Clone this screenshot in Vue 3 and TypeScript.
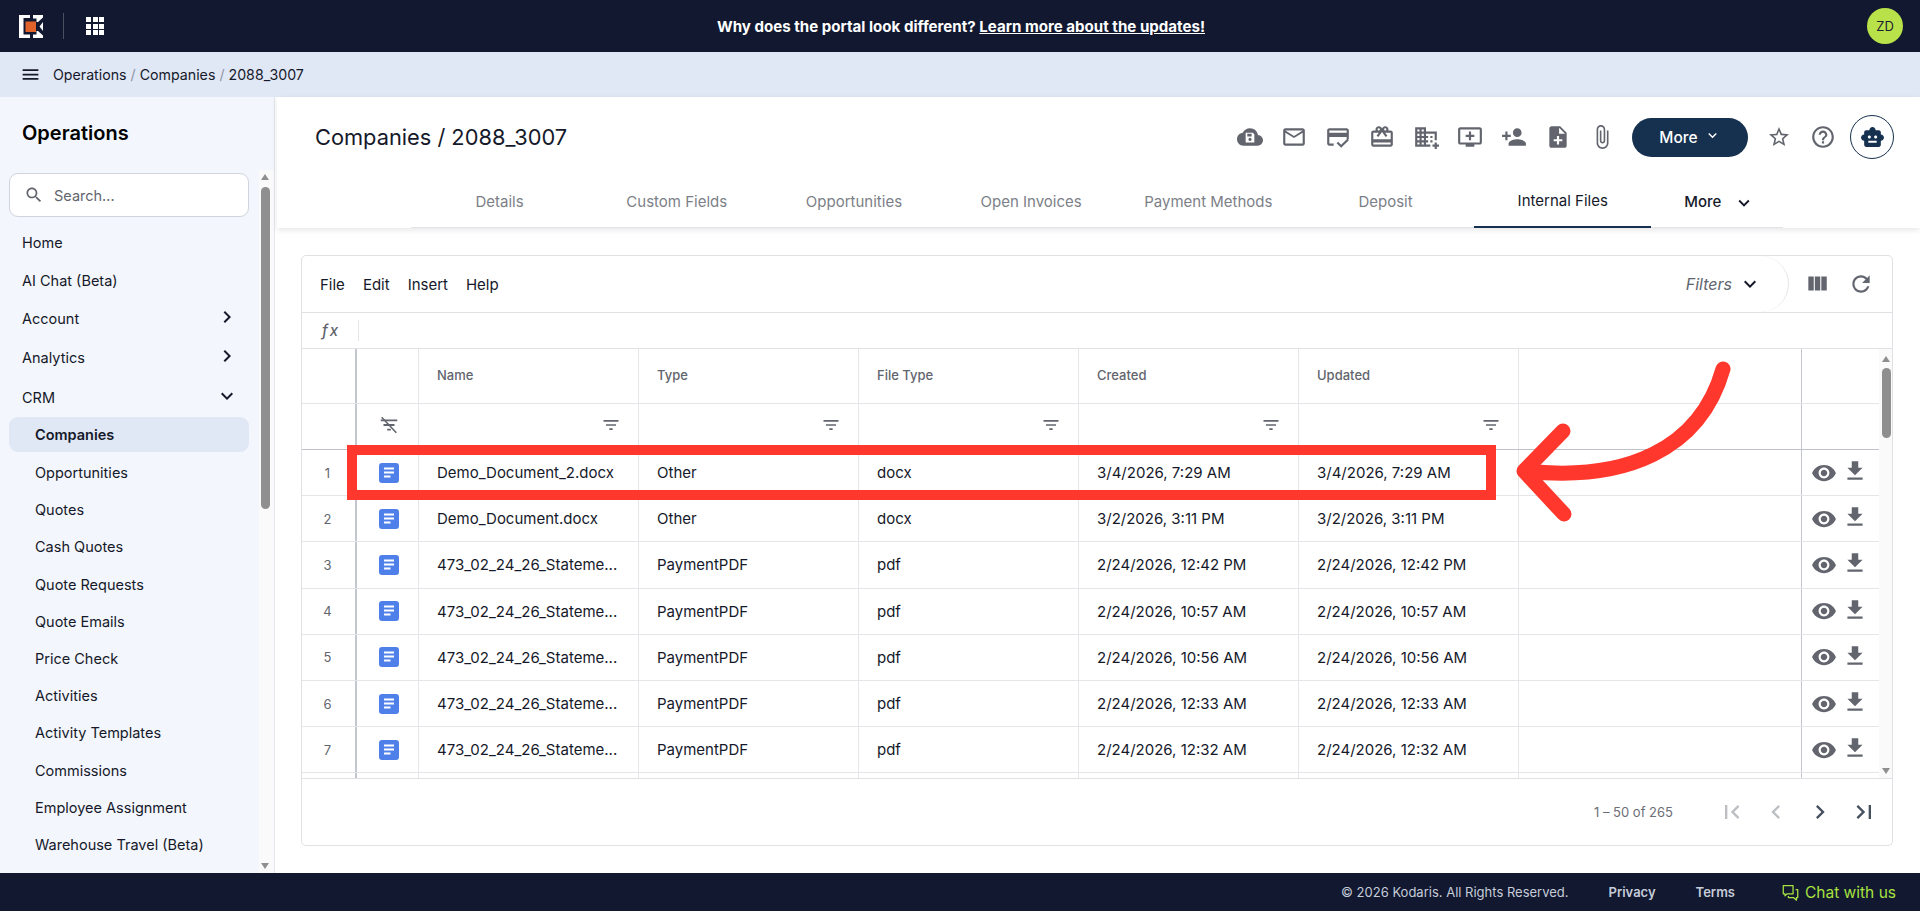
<script setup lang="ts">
const icons: Record<string, string> = {
  cloud: 'M19.35 10.04C18.67 6.59 15.64 4 12 4 9.11 4 6.6 5.64 5.35 8.04 2.34 8.36 0 10.91 0 14c0 3.31 2.69 6 6 6h13c2.76 0 5-2.24 5-5 0-2.64-2.05-4.78-4.65-4.96z',
  mail: 'M20 4H4c-1.1 0-1.99.9-1.99 2L2 18c0 1.1.9 2 2 2h16c1.1 0 2-.9 2-2V6c0-1.1-.9-2-2-2zm0 14H4V8l8 5 8-5v10zm-8-7L4 6h16l-8 5z',
  card: 'M20 4H4c-1.11 0-2 .89-2 2v12c0 1.11.89 2 2 2h4v-2H4v-6h16v2h2V6c0-1.1-.9-2-2-2zm0 4H4V6h16v2zm-5.07 11.17-2.83-2.83-1.41 1.41L14.93 22 22 14.93l-1.41-1.41-5.66 5.65z',
  gift: 'M20 6h-2.18c.11-.31.18-.65.18-1 0-1.66-1.34-3-3-3-1.05 0-1.96.54-2.5 1.35l-.5.67-.5-.68C10.96 2.54 10.05 2 9 2 7.34 2 6 3.34 6 5c0 .35.07.69.18 1H4c-1.11 0-1.99.89-1.99 2L2 19c0 1.11.89 2 2 2h16c1.11 0 2-.89 2-2V8c0-1.11-.89-2-2-2zm-5-2c.55 0 1 .45 1 1s-.45 1-1 1-1-.45-1-1 .45-1 1-1zM9 4c.55 0 1 .45 1 1s-.45 1-1 1-1-.45-1-1 .45-1 1-1zm11 15H4v-2h16v2zm0-5H4V8h5.08L7 10.83 8.62 12 11 8.76l1-1.36 1 1.36L15.38 12 17 10.83 14.92 8H20v6z',
  domain: 'M12 7V3H2v18h14v-2h-4v-2h2v-2h-2v-2h2v-2h-2V9h8v6h2V7H12zM6 19H4v-2h2v2zm0-4H4v-2h2v2zm0-4H4V9h2v2zm0-4H4V5h2v2zm4 12H8v-2h2v2zm0-4H8v-2h2v2zm0-4H8V9h2v2zm0-4H8V5h2v2zm14 12v2h-2v2h-2v-2h-2v-2h2v-2h2v2h2zm-6-8h-2v2h2v-2zm0 4h-2v2h2v-2z',
  queue: 'M21 3H3c-1.11 0-2 .89-2 2v12c0 1.1.89 2 2 2h5v2h8v-2h5c1.1 0 1.99-.9 1.99-2L23 5c0-1.11-.9-2-2-2zm0 14H3V5h18v12zm-5-7v2h-3v3h-2v-3H8v-2h3V7h2v3h3z',
  person: 'M15 12c2.21 0 4-1.79 4-4s-1.79-4-4-4-4 1.79-4 4 1.79 4 4 4zm-9-2V7H4v3H1v2h3v3h2v-3h3v-2H6zm9 4c-2.67 0-8 1.34-8 4v2h16v-2c0-2.66-5.33-4-8-4z',
  note: 'M14 2H6c-1.1 0-1.99.9-1.99 2L4 20c0 1.1.89 2 1.99 2H18c1.1 0 2-.9 2-2V8l-6-6zm2 14h-3v3h-2v-3H8v-2h3v-3h2v3h3v2zm-3-7V3.5L18.5 9H13z',
  attach: 'M16.5 6v11.5c0 2.21-1.79 4-4 4s-4-1.79-4-4V5c0-1.38 1.12-2.5 2.5-2.5s2.5 1.12 2.5 2.5v10.5c0 .55-.45 1-1 1s-1-.45-1-1V6H10v9.5c0 1.38 1.12 2.5 2.5 2.5s2.5-1.12 2.5-2.5V5c0-2.21-1.79-4-4-4S7 2.79 7 5v12.5c0 3.04 2.46 5.5 5.5 5.5s5.5-2.46 5.5-5.5V6h-1.5z',
  star: 'M22 9.24l-7.19-.62L12 2 9.19 8.63 2 9.24l5.46 4.73L5.82 21 12 17.27 18.18 21l-1.63-7.03L22 9.24zM12 15.4l-3.76 2.27 1-4.28-3.32-2.88 4.38-.38L12 6.1l1.71 4.04 4.38.38-3.32 2.88 1 4.28L12 15.4z',
  help: 'M11 18h2v-2h-2v2zm1-16C6.48 2 2 6.48 2 12s4.48 10 10 10 10-4.48 10-10S17.52 2 12 2zm0 18c-4.41 0-8-3.59-8-8s3.59-8 8-8 8 3.59 8 8-3.59 8-8 8zm0-14c-2.21 0-4 1.79-4 4h2c0-1.1.9-2 2-2s2 .9 2 2c0 2-3 1.75-3 5h2c0-2.25 3-2.5 3-5 0-2.21-1.79-4-4-4z',
  eye: 'M12 4.5C7 4.5 2.73 7.61 1 12c1.73 4.39 6 7.5 11 7.5s9.27-3.11 11-7.5c-1.73-4.39-6-7.5-11-7.5zM12 17c-2.76 0-5-2.24-5-5s2.24-5 5-5 5 2.24 5 5-2.24 5-5 5zm0-8c-1.66 0-3 1.34-3 3s1.34 3 3 3 3-1.34 3-3-1.34-3-3-3z',
  download: 'M19 9h-4V3H9v6H5l7 7 7-7zM5 18v2h14v-2H5z',
  refresh: 'M17.65 6.35C16.2 4.9 14.21 4 12 4c-4.42 0-7.99 3.58-7.99 8s3.57 8 7.99 8c3.73 0 6.84-2.55 7.73-6h-2.08c-.82 2.33-3.04 4-5.65 4-3.31 0-6-2.69-6-6s2.69-6 6-6c1.66 0 3.14.69 4.22 1.78L13 11h7V4l-2.35 2.35z',
  columns: 'M10 18h5V5h-5v13zm-6 0h5V5H4v13zM16 5v13h5V5h-5z',
  filter: 'M10 18h4v-2h-4v2zM3 6v2h18V6H3zm3 7h12v-2H6v2z',
  first: 'M18.41 16.59L13.82 12l4.59-4.59L17 6l-6 6 6 6zM6 6h2v12H6z',
  prev: 'M15.41 7.41L14 6l-6 6 6 6 1.41-1.41L10.83 12z',
  next: 'M10 6L8.59 7.41 13.17 12l-4.58 4.59L10 18l6-6z',
  last: 'M5.59 7.41L10.18 12l-4.59 4.59L7 18l6-6-6-6zM16 6h2v12h-2z',
  down: 'M7.41 8.59L12 13.17l4.59-4.58L18 10l-6 6-6-6z',
  search: 'M15.5 14h-.79l-.28-.27C15.41 12.59 16 11.11 16 9.5 16 5.91 13.09 3 9.5 3S3 5.91 3 9.5 5.91 16 9.5 16c1.61 0 3.09-.59 4.23-1.57l.27.28v.79l5 4.99L20.49 19l-4.99-5zm-6 0C7.01 14 5 11.99 5 9.5S7.01 5 9.5 5 14 7.01 14 9.5 11.99 14 9.5 14z',
  robot: 'M20 9V7c0-1.1-.9-2-2-2h-3c0-1.66-1.34-3-3-3S9 3.34 9 5H6c-1.1 0-2 .9-2 2v2c-1.66 0-3 1.34-3 3s1.34 3 3 3v4c0 1.1.9 2 2 2h12c1.1 0 2-.9 2-2v-4c1.66 0 3-1.34 3-3s-1.34-3-3-3zM7.5 11.5C7.5 10.67 8.17 10 9 10s1.5.67 1.5 1.5S9.83 13 9 13s-1.5-.67-1.5-1.5zM16 17H8v-2h8v2zm-1-4c-.83 0-1.5-.67-1.5-1.5S14.17 10 15 10s1.5.67 1.5 1.5S15.83 13 15 13z',
  menu: 'M3 18h18v-2H3v2zm0-5h18v-2H3v2zm0-7v2h18V6H3z',
}

const toolIcons = ['mail', 'card', 'gift', 'domain', 'queue', 'person', 'note', 'attach']
const tabs = ['Details', 'Custom Fields', 'Opportunities', 'Open Invoices', 'Payment Methods', 'Deposit', 'Internal Files']
const headers = ['Name', 'Type', 'File Type', 'Created', 'Updated']

const navTop = [
  { label: 'Home' },
  { label: 'AI Chat (Beta)' },
  { label: 'Account', chev: 'next' },
  { label: 'Analytics', chev: 'next' },
  { label: 'CRM', chev: 'down' },
]
const navSub = ['Companies', 'Opportunities', 'Quotes', 'Cash Quotes', 'Quote Requests', 'Quote Emails', 'Price Check', 'Activities', 'Activity Templates', 'Commissions', 'Employee Assignment', 'Warehouse Travel (Beta)']

const stmt = '473_02_24_26_Stateme...'
const rows = [
  ['Demo_Document_2.docx', 'Other', 'docx', '3/4/2026, 7:29 AM'],
  ['Demo_Document.docx', 'Other', 'docx', '3/2/2026, 3:11 PM'],
  [stmt, 'PaymentPDF', 'pdf', '2/24/2026, 12:42 PM'],
  [stmt, 'PaymentPDF', 'pdf', '2/24/2026, 10:57 AM'],
  [stmt, 'PaymentPDF', 'pdf', '2/24/2026, 10:56 AM'],
  [stmt, 'PaymentPDF', 'pdf', '2/24/2026, 12:33 AM'],
  [stmt, 'PaymentPDF', 'pdf', '2/24/2026, 12:32 AM'],
]
</script>

<template>
  <div class="page">
    <header class="topbar">
      <div class="brand">
        <svg class="logo" viewBox="0 0 24 24" width="24" height="24">
          <path fill="#fff" d="M0 1H11V4H4.500V20.500H11V24H0zM14 1H24V3.500L19 8H17.500V4.500H14zM14 24H24V21.500L19 17H17.500V20.500H14zM24 8L20.500 12.500L24 17z" />
          <rect x="6.500" y="7.500" width="10.500" height="10.500" fill="#e2632a" />
        </svg>
        <span class="brand-rule"></span>
        <span class="apps"><i v-for="n in 9" :key="n"></i></span>
      </div>
      <p class="banner">Why does the portal look different? <a>Learn more about the updates!</a></p>
      <span class="avatar">ZD</span>
    </header>

    <nav class="crumbs">
      <svg class="crumb-menu" viewBox="0 0 24 24"><path :d="icons.menu" /></svg>
      <span>Operations</span><em>/</em><span>Companies</span><em>/</em><span>2088_3007</span>
    </nav>

    <div class="body">
      <aside class="side">
        <h2 class="side-title">Operations</h2>
        <div class="side-scroll">
          <div class="side-list">
            <label class="search">
              <svg viewBox="0 0 24 24"><path :d="icons.search" /></svg>
              <span>Search...</span>
            </label>
            <ul class="nav-top">
              <li v-for="n in navTop" :key="n.label">
                <span>{{ n.label }}</span>
                <svg v-if="n.chev" viewBox="0 0 24 24"><path :d="icons[n.chev]" /></svg>
              </li>
            </ul>
            <ul class="nav-sub">
              <li v-for="(s, i) in navSub" :key="s" :class="{ on: i === 0 }">{{ s }}</li>
            </ul>
          </div>
          <div class="side-bar">
            <i class="arrow up"></i>
            <i class="thumb"></i>
            <i class="arrow dn"></i>
          </div>
        </div>
      </aside>

      <main class="main">
        <section class="head">
          <div class="head-row">
            <h1>Companies / 2088_3007</h1>
            <div class="tools">
              <svg class="tool" viewBox="0 0 24 24">
                <path :d="icons.cloud" />
                <path fill="#fff" fill-rule="evenodd" d="M8 8h6.500L16 9.500V17H8zM9.500 9v2.500h4V9zM12 12.800a1.500 1.500 0 1 0 .01 0z" />
              </svg>
              <svg v-for="t in toolIcons" :key="t" class="tool" viewBox="0 0 24 24"><path :d="icons[t]" /></svg>
              <button class="more-btn">More <svg viewBox="0 0 24 24"><path :d="icons.down" /></svg></button>
              <svg class="tool star" viewBox="0 0 24 24"><path :d="icons.star" /></svg>
              <svg class="tool q" viewBox="0 0 24 24"><path :d="icons.help" /></svg>
              <span class="robot"><svg viewBox="0 0 24 24"><path :d="icons.robot" /></svg></span>
            </div>
          </div>
          <div class="tabs">
            <a v-for="t in tabs" :key="t" :class="{ active: t === 'Internal Files' }">{{ t }}</a>
            <a class="tab-more">More <svg viewBox="0 0 24 24"><path :d="icons.down" /></svg></a>
          </div>
        </section>

        <section class="card">
          <div class="menubar">
            <span v-for="m in ['File', 'Edit', 'Insert', 'Help']" :key="m">{{ m }}</span>
            <div class="filters">
              <i>Filters</i>
              <svg viewBox="0 0 24 24"><path :d="icons.down" /></svg>
            </div>
            <div class="menu-icons">
              <svg viewBox="0 0 24 24"><path :d="icons.columns" /></svg>
              <svg viewBox="0 0 24 24"><path :d="icons.refresh" /></svg>
            </div>
          </div>
          <div class="fxbar"><i>fx</i><b></b></div>
          <div class="grid-wrap">
            <div class="grid">
              <div class="row hdr">
                <div class="c num"></div>
                <div class="c ico"></div>
                <div v-for="h in headers" :key="h" class="c">{{ h }}</div>
                <div class="c"></div>
                <div class="c act"></div>
              </div>
              <div class="row flt">
                <div class="c num"></div>
                <div class="c ico">
                  <svg class="nofilter" viewBox="0 0 24 24">
                    <path :d="icons.filter" />
                    <path class="slash" d="M4 3.500L20 20.500" />
                  </svg>
                </div>
                <div v-for="h in headers" :key="h" class="c end">
                  <svg viewBox="0 0 24 24"><path :d="icons.filter" /></svg>
                </div>
                <div class="c"></div>
                <div class="c act"></div>
              </div>
              <div v-for="(r, i) in rows" :key="i" class="row data">
                <div class="c num">{{ i + 1 }}</div>
                <div class="c ico">
                  <svg class="doc" viewBox="0 0 20 20">
                    <rect width="20" height="20" rx="3" fill="#4f80ea" />
                    <path class="doc-lines" d="M5 5.500h10M5 9.500h10M5 13.500h6.500" />
                  </svg>
                </div>
                <div class="c">{{ r[0] }}</div>
                <div class="c">{{ r[1] }}</div>
                <div class="c">{{ r[2] }}</div>
                <div class="c">{{ r[3] }}</div>
                <div class="c">{{ r[3] }}</div>
                <div class="c"></div>
                <div class="c act">
                  <svg class="a-eye" viewBox="0 0 24 24"><path :d="icons.eye" /></svg>
                  <svg class="a-dl" viewBox="0 0 24 24"><path :d="icons.download" /></svg>
                </div>
              </div>
              <div class="row stub">
                <div class="c num"></div><div class="c ico"></div>
                <div v-for="h in headers" :key="h" class="c"></div>
                <div class="c"></div><div class="c act"></div>
              </div>
            </div>
            <div class="grid-bar">
              <i class="arrow up"></i>
              <i class="thumb"></i>
              <i class="arrow dn"></i>
            </div>
          </div>
          <div class="pager">
            <span class="count">1 – 50 of 265</span>
            <svg class="off" viewBox="0 0 24 24"><path :d="icons.first" /></svg>
            <svg class="off" viewBox="0 0 24 24"><path :d="icons.prev" /></svg>
            <svg viewBox="0 0 24 24"><path :d="icons.next" /></svg>
            <svg viewBox="0 0 24 24"><path :d="icons.last" /></svg>
          </div>
        </section>
      </main>
    </div>

    <footer class="foot">
      <span class="copy">© 2026 Kodaris. All Rights Reserved.</span>
      <a>Privacy</a>
      <a>Terms</a>
      <span class="chat">
        <svg class="chat-ico" viewBox="0 0 20 20">
          <path d="M1.500 2h11.500v9.500H6L3.500 14V11.500H1.500z" />
          <path d="M16 6.500h2.500V16H17v3L13.500 16H7.500V14" />
        </svg>
        Chat with us
      </span>
    </footer>

    <svg class="annot" viewBox="0 0 1920 911">
      <rect x="352" y="450" width="1139" height="45" stroke-width="10" />
      <path d="M1723 369C1700 450 1625 482 1525 471" stroke-width="15" stroke-linecap="round" />
      <path d="M1563 431L1524 471L1564 514" stroke-width="15" stroke-linecap="round" stroke-linejoin="round" />
    </svg>
  </div>
</template>

<style>
html, body { margin: 0; height: 100%; overflow: hidden; background: #fff; }
</style>

<style scoped>
.page {
  position: relative;
  height: 911px;
  display: flex;
  flex-direction: column;
  font-family: Inter, "Liberation Sans", sans-serif;
  color: #15192a;
  overflow: hidden;
}
svg { display: block; fill: currentColor; flex: none; }
ul { list-style: none; margin: 0; padding: 0; }

.topbar {
  height: 52px;
  flex: none;
  background: #111830;
  display: grid;
  grid-template-columns: 1fr auto 1fr;
  align-items: center;
  padding: 0 17px 0 19px;
  color: #fff;
}
.brand { display: flex; align-items: center; }
.logo { width: 24px; height: 24px; }
.brand-rule { width: 1px; height: 26px; background: #4a5061; margin: 0 22px 0 20px; }
.apps { display: grid; grid-template-columns: repeat(3, 5px); gap: 1.500px; }
.apps i { width: 5px; height: 5px; background: #fff; }
.banner { margin: 0; text-align: center; font-weight: 700; font-size: 15.100px; }
.banner a { text-decoration: underline; }
.avatar {
  justify-self: end;
  width: 36px; height: 36px; border-radius: 50%;
  background: #b9e24a; color: #1a2030;
  display: flex; align-items: center; justify-content: center;
  font-size: 13px;
}

.crumbs {
  height: 45px;
  flex: none;
  background: #e0e7f5;
  display: flex;
  align-items: center;
  padding-left: 20px;
  font-size: 14.200px;
  color: #15192a;
}
.crumb-menu { width: 21px; height: 21px; margin-right: 12px; }
.crumbs em { font-style: normal; color: #8f95a3; margin: 0 4px; }

.body { flex: 1; min-height: 0; display: flex; }

.side {
  width: 274px;
  flex: none;
  background: #f3f6fc;
  display: flex;
  flex-direction: column;
  border-right: 1px solid #e3e6ec;
}
.side-title { margin: 0; padding: 23px 0 0 22px; height: 50px; font-size: 20px; font-weight: 600; color: #000; line-height: 27px; box-sizing: content-box; }
.side-scroll { flex: 1; min-height: 0; display: flex; overflow: hidden; padding-right: 3px; }
.side-list { flex: 1; min-width: 0; padding: 3px 10px 0 9px; overflow: hidden; }
.search {
  height: 44px; box-sizing: border-box;
  border: 1px solid #cfd4de; border-radius: 9px; background: #fff;
  display: flex; align-items: center; padding-left: 14px; gap: 10px;
  font-size: 14.500px; color: #62656d;
}
.search svg { width: 20px; height: 20px; color: #62656d; }
.nav-top { margin-top: 6px; }
.nav-top li {
  height: 38px; padding: 0 10px 0 13px;
  display: flex; align-items: center; justify-content: space-between;
  font-size: 14.500px; color: #15192a;
}
.nav-top li:nth-child(n+4) { height: 40px; }
.nav-top svg { width: 24px; height: 24px; margin-top: -2px; }
.nav-sub li {
  height: 37.200px; padding-left: 26px;
  display: flex; align-items: center;
  font-size: 14.500px; color: #15192a;
  border-radius: 9px;
}
.nav-sub li.on { height: 35px; margin-bottom: 2px; background: #e0e7f5; font-weight: 600; }

.side-bar, .grid-bar { flex: none; display: flex; flex-direction: column; align-items: center; background: #fafafa; box-sizing: border-box; }
.side-bar { padding: 4px 3px 0 0; width: 15px; margin-right: -3px; }
.thumb { display: block; width: 9px; background: #8f8f8f; border-radius: 5px; }
.side-bar .thumb { height: 322px; margin-top: 7px; }
.arrow { display: block; width: 0; height: 0; border-left: 4.500px solid transparent; border-right: 4.500px solid transparent; }
.arrow.up { border-bottom: 6px solid #8f8f8f; }
.arrow.dn { border-top: 6px solid #8f8f8f; margin-top: auto; margin-bottom: 4px; }

.main { flex: 1; min-width: 0; display: flex; flex-direction: column; background: #fff; }
.head { height: 131px; flex: none; box-shadow: 0 2px 6px rgba(0, 0, 0, .1); margin-left: 2px; display: flex; flex-direction: column; position: relative; }
.head-row { display: flex; align-items: center; justify-content: space-between; height: 78px; box-sizing: border-box; padding: 2px 26px 0 38px; }
h1 { margin: 0; font-size: 21.800px; font-weight: 400; color: #15192a; }
.tools { display: flex; align-items: center; }
.tool { width: 26px; height: 26px; margin-right: 18px; color: #62656d; }
.tools .tool:nth-child(9) { margin-right: 17px; }
.more-btn {
  width: 116px; height: 39px; border: 0; border-radius: 20px;
  background: #16304f; color: #fff;
  font: 500 15.500px Inter, sans-serif;
  display: flex; align-items: center; justify-content: center; gap: 6px;
  margin-right: 19px;
}
.more-btn svg { width: 17px; height: 17px; margin-top: -3px; }
.tools .star { width: 24px; height: 24px; margin-right: 19px; }
.tools .q { margin-right: 14px; }
.robot {
  width: 44px; height: 44px; box-sizing: border-box; border: 1px solid #16304f; border-radius: 50%;
  display: flex; align-items: center; justify-content: center; color: #16304f;
}
.robot svg { width: 25px; height: 25px; }
.tabs {
  margin: 0 137px 0 134px;
  flex: 1;
  display: flex;
  border-bottom: 1px solid #e2e4e9;
}
.tabs a {
  width: 177.200px; flex: none;
  display: flex; align-items: center; justify-content: center;
  font-size: 15px; color: #7c7f87;
  box-sizing: border-box;
  margin-bottom: -1px;
}
.tabs a.active { color: #15192a; border-bottom: 2px solid #16304f; }
.tabs .tab-more { color: #15192a; font-weight: 500; gap: 12px; width: auto; padding-left: 33px; justify-content: flex-start; }
.tab-more svg { width: 22px; height: 22px; margin-top: 3px; }

.card {
  margin: 27px 27px 0 26px;
  height: 591px;
  border: 1px solid #dfe1e5;
  border-radius: 5px;
  display: flex;
  flex-direction: column;
  box-sizing: border-box;
  overflow: hidden;
}
.menubar {
  height: 57px; flex: none;
  border-bottom: 1px solid #dfe1e5;
  box-sizing: border-box;
  display: flex; align-items: center;
  padding-left: 18px;
  gap: 18px;
  font-size: 15px;
}
.filters {
  margin-left: auto;
  height: 56px; box-sizing: border-box;
  width: 300px;
  display: flex; align-items: center; justify-content: flex-end; gap: 6px;
  border-right: 1px solid #e4e6ea;
  border-radius: 0 28px 28px 0;
  padding-right: 26px;
  font-size: 16px; color: #62656d;
}
.filters svg { width: 24px; height: 24px; color: #15192a; }
.menu-icons { display: flex; gap: 18px; padding-right: 18px; margin-left: -3px; color: #62656d; align-items: center; }
.menu-icons svg { width: 26px; height: 26px; }
.fxbar {
  height: 36px; flex: none;
  border-bottom: 1px solid #dfe1e5;
  box-sizing: border-box;
  display: flex; align-items: center;
  padding-left: 20px;
  font-size: 15px; color: #62656d;
}
.fxbar i { width: 36px; letter-spacing: 2px; font-weight: 500; }
.fxbar b { width: 1px; height: 21px; background: #e4e6ea; }

.grid-wrap { height: 429px; flex: none; display: flex; overflow: hidden; border-bottom: 1px solid #dfe1e5; }
.grid { width: 1577px; flex: none; }
.grid-bar { width: 14px; padding-top: 7px; }
.grid-bar .thumb { height: 70px; margin-top: 6px; }
.row {
  display: grid;
  grid-template-columns: 55px 62px 220px 220px 220px 220px 220px 283px 77px;
  box-sizing: border-box;
  border-bottom: 1px solid #e4e6ea;
  font-size: 15px;
}
.c { display: flex; align-items: center; padding-left: 18px; border-right: 1px solid #e4e6ea; box-sizing: border-box; min-width: 0; white-space: nowrap; }
.c.num { padding: 0 2px 0 0; justify-content: center; color: #62656d; font-size: 13px; border-right: 2px solid #c3c6cd; }
.c.ico { padding: 0 0 0 3px; justify-content: center; }
.c.act { border-right: 0; border-left: 1px solid #c3c6cd; margin-left: -1px; padding: 0 0 0 9px; gap: 5px; }
.c.end { justify-content: flex-end; padding: 0 17px 3px 0; }
.end svg { width: 20px; height: 20px; color: #62656d; }
.flt .ico { padding-bottom: 3px; }
.nofilter { width: 22px; height: 22px; color: #62656d; }
.slash { fill: none; stroke: #62656d; stroke-width: 1.700; }
.hdr { height: 55px; color: #62656d; font-size: 13px; font-weight: 500; }
.hdr .c { padding-bottom: 2px; }
.flt { height: 46px; border-bottom-color: #bfc2c9; }
.data { height: 46.200px; color: #15192a; }
.stub { height: 20px; }
.doc { width: 20px; height: 20px; }
.doc-lines { fill: none; stroke: #fff; stroke-width: 1.800; }
.a-eye { width: 26px; height: 26px; color: #62656d; }
.a-dl { width: 26px; height: 26px; color: #62656d; margin-top: -3px; }

.pager {
  flex: 1;
  display: flex; align-items: center; justify-content: flex-end;
  padding-right: 14px;
}
.count { font-size: 13px; color: #6b6e76; margin-right: 45px; }
.pager svg { width: 28px; height: 28px; margin-left: 16px; color: #47505f; }
.pager .count + svg { margin-left: 0; }
.pager svg.off { color: #bcbec3; }

.foot {
  height: 38px; flex: none;
  background: #111830;
  display: flex; align-items: center; justify-content: flex-end;
  padding-right: 24px;
  font-size: 13px; color: #c6ccd8;
}
.foot a { font-weight: 600; margin-left: 40px; }
.chat { display: flex; align-items: center; gap: 6px; margin-left: 47px; color: #a8e23f; font-size: 15.500px; }
.chat-ico { width: 17px; height: 17px; fill: none; stroke: currentColor; stroke-width: 1.500; stroke-linejoin: round; }

.annot { position: absolute; inset: 0; width: 1920px; height: 911px; pointer-events: none; fill: none; stroke: #ff372c; }
</style>
